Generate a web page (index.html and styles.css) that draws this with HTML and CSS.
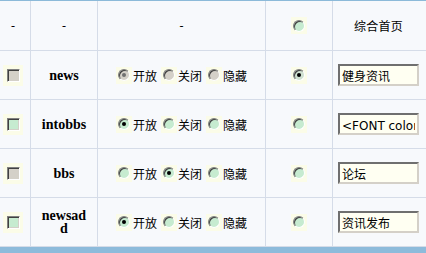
FILE: index.html
```html
<!DOCTYPE html>
<html>
<head>
<meta charset="utf-8">
<link rel="stylesheet" href="styles.css">
</head>
<body>
<div class="sheet">
  <div class="row head">
    <div class="c1">-</div>
    <div class="c2">-</div>
    <div class="c3">-</div>
    <div class="c4"><span class="rbox"><span class="rd green"></span></span></div>
    <div class="c5">综合首页</div>
  </div>

  <div class="row">
    <div class="c1"><span class="cbox"><span class="ck grey"></span></span></div>
    <div class="c2"><div class="name">news</div></div>
    <div class="c3">
      <span class="opt"><span class="rbox"><span class="rd grey on dim"></span></span>开放</span>
      <span class="opt"><span class="rbox"><span class="rd grey"></span></span>关闭</span>
      <span class="opt"><span class="rbox"><span class="rd grey"></span></span>隐藏</span>
    </div>
    <div class="c4"><span class="rbox"><span class="rd greygreen on"></span></span></div>
    <div class="c5"><input class="txt" type="text" value="健身资讯"></div>
  </div>

  <div class="row">
    <div class="c1"><span class="cbox"><span class="ck green"></span></span></div>
    <div class="c2"><div class="name">intobbs</div></div>
    <div class="c3">
      <span class="opt"><span class="rbox"><span class="rd green on"></span></span>开放</span>
      <span class="opt"><span class="rbox"><span class="rd green"></span></span>关闭</span>
      <span class="opt"><span class="rbox"><span class="rd green"></span></span>隐藏</span>
    </div>
    <div class="c4"><span class="rbox"><span class="rd green"></span></span></div>
    <div class="c5"><input class="txt" type="text" value="<FONT color=#ff0000>论坛</FONT>"></div>
  </div>

  <div class="row">
    <div class="c1"><span class="cbox"><span class="ck grey"></span></span></div>
    <div class="c2"><div class="name">bbs</div></div>
    <div class="c3">
      <span class="opt"><span class="rbox"><span class="rd green"></span></span>开放</span>
      <span class="opt"><span class="rbox"><span class="rd green on"></span></span>关闭</span>
      <span class="opt"><span class="rbox"><span class="rd green"></span></span>隐藏</span>
    </div>
    <div class="c4"><span class="rbox"><span class="rd green"></span></span></div>
    <div class="c5"><input class="txt" type="text" value="论坛"></div>
  </div>

  <div class="row">
    <div class="c1"><span class="cbox"><span class="ck green"></span></span></div>
    <div class="c2"><div class="name">newsadd</div></div>
    <div class="c3">
      <span class="opt"><span class="rbox"><span class="rd green on"></span></span>开放</span>
      <span class="opt"><span class="rbox"><span class="rd green"></span></span>关闭</span>
      <span class="opt"><span class="rbox"><span class="rd green"></span></span>隐藏</span>
    </div>
    <div class="c4"><span class="rbox"><span class="rd green"></span></span></div>
    <div class="c5"><input class="txt" type="text" value="资讯发布"></div>
  </div>

  <div class="bar"></div>
</div>
</body>
</html>
```

FILE: styles.css
```css
html, body {
  margin: 0;
  padding: 0;
  background: #f7f9fc;
  overflow: hidden;
}

.sheet {
  width: 428px;
  border-top: 1px solid #8cbad9;
  font-family: "Noto Sans CJK SC", "DejaVu Sans", sans-serif;
  font-size: 12px;
  color: #000;
  background: #f7f9fc;
}

.row {
  display: grid;
  grid-template-columns: 31px 67px 168px 67px 96px;
  height: 49px;
}

.row.head {
  height: 50px;
}

.row > div {
  box-sizing: border-box;
  border-right: 1px solid #d5dce8;
  border-bottom: 1px solid #d5dce8;
  display: flex;
  align-items: center;
  justify-content: center;
  line-height: 14px;
}

.row > .c1 {
  padding-right: 4px;
}

.row > .c5 {
  padding-right: 4px;
}

.head > div {
  font-family: "Liberation Serif", "Noto Sans CJK SC", serif;
  font-size: 12px;
}

.head > .c5 {
  font-family: "Noto Sans CJK SC", sans-serif;
  font-size: 12px;
  letter-spacing: 0.3px;
}

.name {
  width: 48px;
  text-align: center;
  word-break: break-all;
  font-family: "Liberation Serif", serif;
  font-weight: bold;
  font-size: 14px;
  line-height: 13px;
}

.opt {
  display: inline-flex;
  align-items: center;
  margin-right: 4px;
  padding-top: 2px;
}

.opt:last-child {
  margin-right: 0;
}

.opt .rbox {
  margin-right: 1px;
  margin-top: -2px;
}

.rbox {
  width: 16px;
  height: 17px;
  background: #fbfce8;
  display: inline-flex;
  align-items: center;
  justify-content: center;
}

.rd {
  position: relative;
  box-sizing: border-box;
  width: 12px;
  height: 12px;
  border-radius: 50%;
  border: 1px solid;
  border-color: #808080 #ffffff #ffffff #808080;
  box-shadow: inset 1px 1px 0 #404040;
}

.rd.green {
  background: #c6ebd0;
}

.rd.grey {
  background: #d4d0c8;
}

.rd.greygreen {
  background: #cfe0d0;
}

.rd.on::after {
  content: "";
  position: absolute;
  left: 3px;
  top: 3px;
  width: 4px;
  height: 4px;
  border-radius: 50%;
  background: #000;
}

.rd.on.dim::after {
  background: #707070;
}

.cbox {
  width: 20px;
  height: 21px;
  background: #fbfce8;
  display: inline-flex;
  align-items: center;
  justify-content: center;
}

.ck {
  box-sizing: border-box;
  width: 13px;
  height: 13px;
  border: 1px solid;
  border-color: #808080 #ffffff #ffffff #808080;
  box-shadow: inset 1px 1px 0 #404040, inset -1px -1px 0 #d4d0c8;
}

.ck.grey {
  background: #d4d0c8;
}

.ck.green {
  background: #c6ebd0;
}

.txt {
  box-sizing: border-box;
  width: 81px;
  height: 22px;
  margin: 0;
  padding: 1px 2px;
  border: 2px solid;
  border-color: #6f6f6f #d4d0c8 #d4d0c8 #6f6f6f;
  background: #fffff2;
  font-family: "DejaVu Sans", "Noto Sans CJK SC", sans-serif;
  font-size: 12px;
  color: #000;
  outline: none;
}

.bar {
  height: 7px;
  background: #8dbbdb;
}
```
